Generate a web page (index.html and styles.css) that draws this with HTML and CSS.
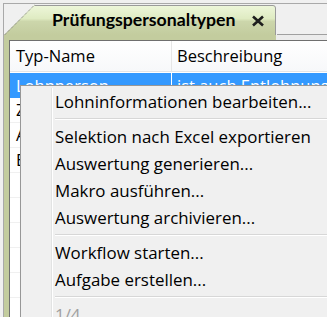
FILE: index.html
```html
<!DOCTYPE html>
<html lang="de">
<head>
<meta charset="utf-8">
<title>Prüfungspersonaltypen</title>
<link rel="stylesheet" href="styles.css">
</head>
<body>
<div class="frame">
  <div class="tabbar">
    <div class="tab">
      <svg class="tab-shape" width="273" height="31" viewBox="0 0 273 31">
        <defs>
          <linearGradient id="tg" x1="0" y1="0" x2="0" y2="1">
            <stop offset="0" stop-color="#eef7db"/>
            <stop offset="0.45" stop-color="#dfebc2"/>
            <stop offset="0.55" stop-color="#ccd6ab"/>
            <stop offset="1" stop-color="#c3cc9e"/>
          </linearGradient>
        </defs>
        <path d="M0,31 L30,1 H269 Q271.5,1 271.5,3.5 V31 Z" fill="url(#tg)"/>
        <path d="M0.5,31 L30.5,1" stroke="#7a7a7a" stroke-width="1" stroke-dasharray="1 1" fill="none"/>
        <path d="M30.5,1.5 H269 Q271.5,1.5 271.5,4 V31" stroke="#9a9a9a" stroke-width="1" fill="none"/>
      </svg>
      <span class="tab-title">Prüfungspersonaltypen</span>
      <svg class="tab-close" width="14" height="12" viewBox="0 0 14 12">
        <path d="M2,1.5 L12,10.5 M12,1.5 L2,10.5" stroke="#1e1e1e" stroke-width="2.6" stroke-linecap="butt"/>
      </svg>
    </div>
    <div class="tab-rest"></div>
  </div>
  <div class="panel">
    <div class="table">
      <div class="row head">
        <div class="c1">Typ-Name</div>
        <div class="c2">Beschreibung</div>
      </div>
      <div class="row sel">
        <div class="c1">Lohnperson</div>
        <div class="c2">ist auch Entlohnungstyp</div>
      </div>
      <div class="row"><div class="c1">Zeitlohn</div><div class="c2"></div></div>
      <div class="row"><div class="c1">Aushilfe</div><div class="c2"></div></div>
      <div class="row"><div class="c1">Beamter</div><div class="c2"></div></div>
      <div class="row"><div class="c1"></div><div class="c2"></div></div>
      <div class="row"><div class="c1"></div><div class="c2"></div></div>
      <div class="row"><div class="c1"></div><div class="c2"></div></div>
      <div class="row"><div class="c1"></div><div class="c2"></div></div>
      <div class="row"><div class="c1"></div><div class="c2"></div></div>
      <div class="row"><div class="c1"></div><div class="c2"></div></div>
    </div>
  </div>
  <div class="menu">
    <div class="item">Lohninformationen bearbeiten...</div>
    <div class="sep"></div>
    <div class="item">Selektion nach Excel exportieren</div>
    <div class="item">Auswertung generieren...</div>
    <div class="item">Makro ausführen...</div>
    <div class="item">Auswertung archivieren...</div>
    <div class="sep"></div>
    <div class="item">Workflow starten...</div>
    <div class="item">Aufgabe erstellen...</div>
    <div class="sep"></div>
    <div class="item disabled">1/4</div>
  </div>
</div>
</body>
</html>
```

FILE: styles.css
```css
html, body {
  margin: 0;
  padding: 0;
  background: #f0f0f0;
  overflow: hidden;
  width: 327px;
  height: 317px;
}
body {
  font-family: "Open Sans", "Noto Sans", sans-serif;
  font-size: 16.5px;
  color: #000;
}
.frame {
  position: relative;
  margin: 3px 0 0 3px;
  border-top: 1px solid #a9a9a9;
  border-left: 1px solid #a9a9a9;
  height: 313px;
  overflow: hidden;
}
.tabbar {
  display: flex;
  height: 31px;
}
.tab {
  position: relative;
  width: 273px;
  height: 31px;
  display: flex;
  align-items: center;
  flex: none;
}
.tab-shape {
  position: absolute;
  left: 0;
  top: 0;
}
.tab-title {
  position: relative;
  margin-left: 48px;
  font-family: "Lato", "Open Sans", sans-serif;
  font-weight: 700;
  font-size: 17.7px;
  line-height: 20px;
  padding-top: 1px;
}
.tab-close {
  position: relative;
  margin-left: 15px;
  margin-top: 2px;
}
.tab-rest {
  flex: 1;
  border-bottom: 1px solid #a0a0a0;
}
.panel {
  background: linear-gradient(to right, #c3cc9e 0, #c3cc9e 272px, #ececec 272px);
  padding: 5px 0 0 5px;
  box-shadow: inset 5px 0 0 #c3cc9e;
}
.table {
  background: #fff;
  border-top: 1px solid #6f6f6f;
  border-left: 1px solid #6f6f6f;
  height: 300px;
}
.row {
  display: flex;
  height: 24px;
  border-bottom: 1px solid #f0f0f0;
  line-height: 24px;
}
.row.head {
  height: 30px;
  line-height: 30px;
  background: linear-gradient(#ffffff, #f7f8fa);
  border-bottom: 1px solid #e2e4e7;
}
.c1 {
  width: 155px;
  padding-left: 6px;
  border-right: 1px solid #e6e6e6;
  white-space: nowrap;
  overflow: hidden;
}
.c2 {
  flex: 1;
  padding-left: 5px;
  white-space: nowrap;
  overflow: hidden;
}
.row.sel {
  background: #3399ff;
  color: #fff;
  margin-top: 1px;
  height: 25px;
  line-height: 26px;
  border-bottom: 0;
}
.row.sel .c1 {
  border-right-color: #ffffff;
}
.menu {
  position: absolute;
  left: 16px;
  top: 81px;
  width: 330px;
  background: #f0f0f0;
  border: 1px solid #979797;
  padding: 2px 0;
  box-shadow: 2px 2px 3px rgba(0,0,0,0.12);
  font-size: 16.9px;
}
.menu::before {
  content: "";
  position: absolute;
  left: 30px;
  top: 2px;
  bottom: 0;
  width: 1px;
  background: #e2e3e3;
  border-right: 1px solid #ffffff;
}
.item {
  height: 27px;
  line-height: 27px;
  padding-left: 34px;
  white-space: nowrap;
}
.item.disabled {
  color: #a0a0a0;
}
.sep {
  height: 8px;
  margin-left: 34px;
  position: relative;
}
.sep::after {
  content: "";
  position: absolute;
  left: 0;
  right: 0;
  top: 3px;
  height: 1px;
  background: #d7d7d7;
  border-bottom: 1px solid #ffffff;
}
```
